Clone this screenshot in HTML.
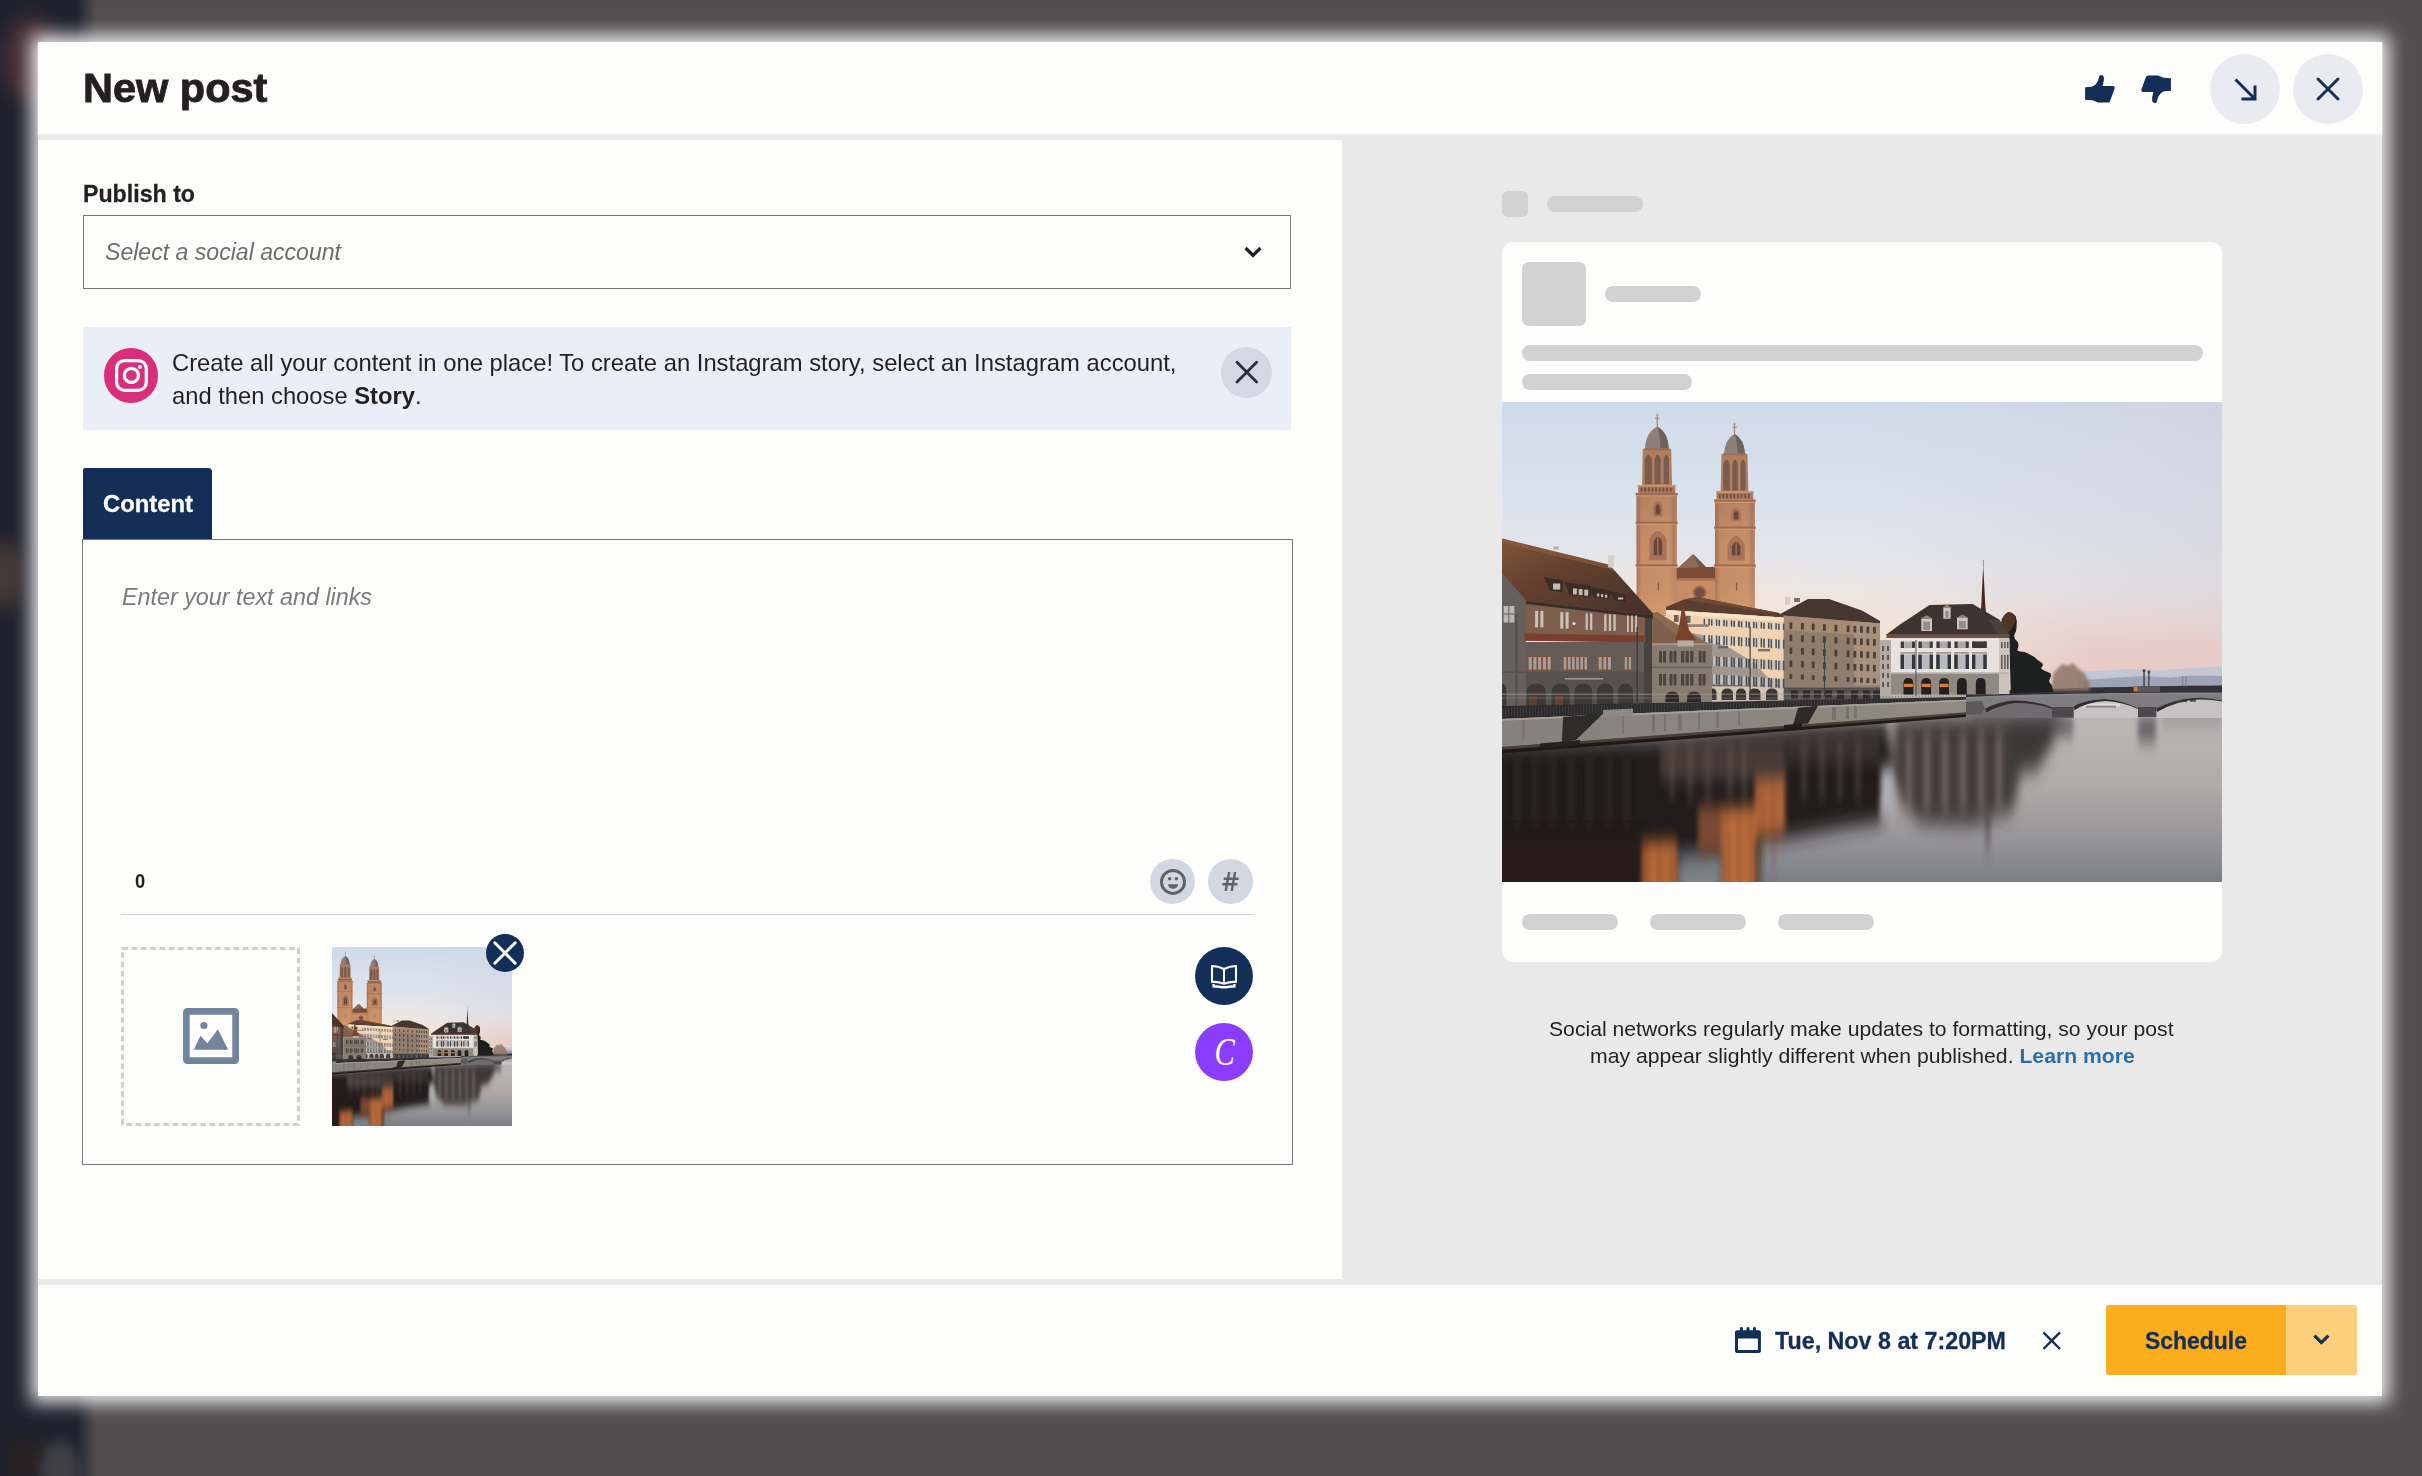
<!DOCTYPE html>
<html lang="en"><head><meta charset="utf-8"><title>New post</title>
<style>
*{box-sizing:border-box;margin:0;padding:0}
html,body{width:2422px;height:1476px;overflow:hidden;background:#524e4f}
body{position:relative;font-family:"Liberation Sans",sans-serif}
.a{position:absolute}
.t{position:absolute;white-space:nowrap;transform-origin:0 0;display:block}
.t b{font-weight:700}
.bgstrip{left:0;top:0;width:110px;height:1476px;background:linear-gradient(to right,#1f212d 0,#1f212d 76px,rgba(31,33,45,0) 96px)}
.blob{border-radius:50%;filter:blur(9px)}
.modal{left:38px;top:42px;width:2344px;height:1354px;background:#e9e9e9;box-shadow:0 0 17px 7px rgba(255,255,255,.88)}
.w{background:#fdfdfc}
.header{left:0;top:0;width:2344px;height:92px;box-shadow:0 1px 2px #f1f1f1}
.leftp{left:0;top:98px;width:1304px;height:1139px}
.footer{left:0;top:1243px;width:2344px;height:111px}
.pill{background:#d2d2d2;border-radius:8px;height:16px}
.circ{border-radius:50%}
svg{position:absolute;display:block;overflow:visible}

</style></head>
<body>
<!-- blurred dashboard behind the dialog -->
<div class="a bgstrip"></div>
<div class="a blob" style="left:2px;top:16px;width:58px;height:86px;background:#4d3338;opacity:.85"></div>
<div class="a blob" style="left:-10px;top:540px;width:30px;height:70px;background:#5b4a3a;opacity:.7"></div>
<div class="a blob" style="left:6px;top:1438px;width:40px;height:44px;background:#2a2220;opacity:.9"></div>
<div class="a blob" style="left:40px;top:1440px;width:40px;height:60px;background:#47474b;opacity:.8;filter:blur(6px)"></div>

<!-- dialog shell -->
<div class="a modal" role="dialog" aria-label="New post">
  <div class="a w header"></div>
  <div class="a w leftp"></div>
  <div class="a w footer"></div>
</div>

<header>
<h1 class="t" style="left:83.4px;top:66.73px;font:normal 700 41.43px/1 'Liberation Sans', sans-serif;color:#241f20;transform:scaleX(1.0015);-webkit-text-stroke:0.9px #241f20;">New post</h1>
<div class="a circ" style="left:2210px;top:54px;width:70px;height:70px;background:#e9ebf0"></div>
<div class="a circ" style="left:2293px;top:54px;width:70px;height:70px;background:#e9ebf0"></div>
<!-- thumbs -->
<svg style="left:2085px;top:75px" width="30" height="28" viewBox="0 0 30 28"><path id="thumb" fill="#132e57" d="M0.1,24.7 L0.1,12.2 L6.6,11.8 Q11.3,10.2 13.2,4.9 L14.1,1.6 Q14.6,0 16.1,0 Q18.6,0.2 18.8,2 L18.9,4.9 L17.7,10.9 L27.6,10.9 Q30.2,11.3 29.6,13.4 L26.1,23.2 L24.7,26.4 Q24,27.6 22.6,27.6 L13.2,27.6 L7.3,25.2 Z"/></svg>
<svg style="left:2141px;top:75px" width="30" height="28" viewBox="0 0 30 28"><path fill="#132e57" transform="rotate(180 15 14)" d="M0.1,24.7 L0.1,12.2 L6.6,11.8 Q11.3,10.2 13.2,4.9 L14.1,1.6 Q14.6,0 16.1,0 Q18.6,0.2 18.8,2 L18.9,4.9 L17.7,10.9 L27.6,10.9 Q30.2,11.3 29.6,13.4 L26.1,23.2 L24.7,26.4 Q24,27.6 22.6,27.6 L13.2,27.6 L7.3,25.2 Z"/></svg>
<!-- minimize arrow + close -->
<svg style="left:2210px;top:54px" width="70" height="70" viewBox="0 0 70 70"><path fill="none" stroke="#132e57" stroke-width="3" d="M25.5,25.5 L44.5,44.5 M45,31.5 V45 H31.5"/></svg>
<svg style="left:2293px;top:54px" width="70" height="70" viewBox="0 0 70 70"><path fill="none" stroke="#132e57" stroke-width="3" stroke-linecap="round" d="M25,25 L45,45 M45,25 L25,45"/></svg>
</header>

<main>
<section class="composer">
<!-- select -->
<div class="a" style="left:83px;top:215px;width:1208px;height:74px;border:1.4px solid #777"></div>
<!-- instagram banner -->
<div class="a" style="left:83px;top:327px;width:1208px;height:103px;background:#e9eef7"></div>
<div class="a circ" style="left:103.8px;top:348px;width:54.6px;height:55px;background:#d92f7a"></div>
<div class="a circ" style="left:1221px;top:347px;width:51px;height:51px;background:#d3d8e2"></div>
<!-- content tab + editor box -->
<div class="a" style="left:83px;top:468px;width:129px;height:72px;background:#132e57;border-radius:2px 4px 0 0"></div>
<div class="a" style="left:81.5px;top:538.5px;width:1211px;height:626.5px;border:1.5px solid #777"></div>
<div class="a" style="left:121px;top:913.5px;width:1132px;height:1.5px;background:#cdd0d5"></div>
<div class="a circ" style="left:1150px;top:859px;width:45px;height:45px;background:#d2d7e1"></div>
<div class="a circ" style="left:1208px;top:859px;width:45px;height:45px;background:#d2d7e1"></div>
<div class="a circ" style="left:1195px;top:946.5px;width:58px;height:58px;background:#132e57"></div>
<div class="a circ" style="left:1195px;top:1023px;width:58px;height:58px;background:#8b3dff"></div>
<!-- dashed upload box -->
<svg style="left:121px;top:947px" width="179" height="179"><rect x="1.5" y="1.5" width="176" height="176" fill="none" stroke="#cfcfcf" stroke-width="3" stroke-dasharray="5.6 3.66"/></svg>
<label class="t" style="left:83.4px;top:182.77px;font:normal 700 23.43px/1 'Liberation Sans', sans-serif;color:#241f20;transform:scaleX(0.9894);-webkit-text-stroke:0.3px #241f20;">Publish to</label>
<span class="t" style="left:105px;top:240.34px;font:italic 400 24.29px/1 'Liberation Sans', sans-serif;color:#6d6d6d;transform:scaleX(0.9502);">Select a social account</span>
<p class="t" style="left:172.4px;top:351.48px;font:normal 400 24.0px/1 'Liberation Sans', sans-serif;color:#241f20;transform:scaleX(0.9916);">Create all your content in one place! To create an Instagram story, select an Instagram account,</p>
<p class="t" style="left:172.4px;top:383.58px;font:normal 400 24.0px/1 'Liberation Sans', sans-serif;color:#241f20;transform:scaleX(0.9893);">and then choose <b>Story</b>.</p>
<span class="t" style="left:102.6px;top:491.84px;font:normal 700 24.29px/1 'Liberation Sans', sans-serif;color:#ffffff;transform:scaleX(0.9813);-webkit-text-stroke:0.3px #fff;">Content</span>
<span class="t" style="left:122px;top:584.64px;font:italic 400 24.29px/1 'Liberation Sans', sans-serif;color:#7b7b7b;transform:scaleX(0.9598);">Enter your text and links</span>
<span class="t" style="left:134.7px;top:872.15px;font:normal 700 19.43px/1 'Liberation Sans', sans-serif;color:#241f20;transform:scaleX(0.9434);">0</span>
</section>

<aside class="preview">
<div class="a pill" style="left:1502px;top:191px;width:26px;height:26px;border-radius:6px"></div>
<div class="a pill" style="left:1547px;top:196px;width:96px"></div>
<div class="a w" style="left:1502px;top:242px;width:720px;height:720px;border-radius:11px"></div>
<div class="a pill" style="left:1522px;top:262px;width:64px;height:64px;border-radius:7px"></div>
<div class="a pill" style="left:1605px;top:286px;width:96px"></div>
<div class="a pill" style="left:1522px;top:345px;width:681px"></div>
<div class="a pill" style="left:1522px;top:374px;width:170px"></div>
<div class="a pill" style="left:1522px;top:914px;width:96px"></div>
<div class="a pill" style="left:1650px;top:914px;width:96px"></div>
<div class="a pill" style="left:1778px;top:914px;width:96px"></div>
<p class="t" style="left:1549.4px;top:1018.74px;font:normal 400 20.86px/1 'Liberation Sans', sans-serif;color:#241f20;transform:scaleX(1.0144);">Social networks regularly make updates to formatting, so your post</p>
<p class="t" style="left:1589.6px;top:1046.44px;font:normal 400 20.86px/1 'Liberation Sans', sans-serif;color:#241f20;transform:scaleX(1.0155);">may appear slightly different when published. <b style="color:#2f6fa7">Learn more</b></p>
</aside>

<!-- photo (preview image + composer thumbnail share one symbol) -->
<svg width="0" height="0" style="position:absolute"><defs>
<linearGradient id="zsky" x1="0" y1="0" x2="0" y2="1">
<stop offset="0" stop-color="#cedbea"/><stop offset=".25" stop-color="#d8e1ec"/><stop offset=".5" stop-color="#e6e6ea"/><stop offset=".68" stop-color="#f0e4dc"/><stop offset=".85" stop-color="#f3dfd0"/><stop offset="1" stop-color="#f0d8c8"/></linearGradient>
<linearGradient id="zskyr" x1="0" y1="0" x2="1" y2="0"><stop offset="0" stop-color="#cfcfdc" stop-opacity="0"/><stop offset=".5" stop-color="#cfcfdc" stop-opacity="0"/><stop offset="1" stop-color="#d2cfdb" stop-opacity=".55"/></linearGradient>
<radialGradient id="zpink" cx=".5" cy=".5" r=".5"><stop offset="0" stop-color="#e7c5c1" stop-opacity=".95"/><stop offset=".45" stop-color="#e8c9c4" stop-opacity=".7"/><stop offset="1" stop-color="#ecd2cc" stop-opacity="0"/></radialGradient>
<radialGradient id="zcream" cx=".5" cy=".5" r=".5"><stop offset="0" stop-color="#f8e7d6" stop-opacity=".95"/><stop offset=".5" stop-color="#f6e5d6" stop-opacity=".6"/><stop offset="1" stop-color="#f4e4d8" stop-opacity="0"/></radialGradient>
<linearGradient id="zwater" x1="0" y1="0" x2="0" y2="1"><stop offset="0" stop-color="#bdb9ba"/><stop offset=".25" stop-color="#b9b2b0"/><stop offset=".5" stop-color="#b0a9a6"/><stop offset=".78" stop-color="#96959a"/><stop offset="1" stop-color="#7b7e86"/></linearGradient>
<linearGradient id="ztower" x1="0" y1="0" x2="1" y2="0"><stop offset="0" stop-color="#a8714f"/><stop offset=".12" stop-color="#c98e66"/><stop offset=".8" stop-color="#cf966e"/><stop offset="1" stop-color="#b98260"/></linearGradient>
<linearGradient id="ztowerv" x1="0" y1="0" x2="0" y2="1"><stop offset="0" stop-color="#8a6a58" stop-opacity=".35"/><stop offset=".5" stop-color="#8a6a58" stop-opacity=".05"/><stop offset="1" stop-color="#e9a674" stop-opacity=".35"/></linearGradient>
<linearGradient id="zroofL" x1="0" y1="0" x2="1" y2="1"><stop offset="0" stop-color="#80543a"/><stop offset=".4" stop-color="#63412f"/><stop offset="1" stop-color="#43302a"/></linearGradient>
<linearGradient id="zdarkfade" x1="0" y1="0" x2="0" y2="1"><stop offset="0" stop-color="#1d1819"/><stop offset=".7" stop-color="#1b1617"/><stop offset="1" stop-color="#22160f"/></linearGradient>
<linearGradient id="zwall" x1="0" y1="0" x2="1" y2="0"><stop offset="0" stop-color="#85817c"/><stop offset=".5" stop-color="#8a857f"/><stop offset="1" stop-color="#918a82"/></linearGradient>
<filter id="zb1" x="-20%" y="-20%" width="140%" height="140%"><feGaussianBlur stdDeviation="2.8 8"/></filter>
<filter id="zb2" x="-20%" y="-20%" width="140%" height="140%"><feGaussianBlur stdDeviation="4 10"/></filter>
<filter id="zb3" x="-20%" y="-20%" width="140%" height="140%"><feGaussianBlur stdDeviation="1.2 3"/></filter>
<filter id="zb0" x="-20%" y="-20%" width="140%" height="140%"><feGaussianBlur stdDeviation="1.5"/></filter>
<clipPath id="zclip"><rect x="0" y="0" width="720" height="480"/></clipPath>
<clipPath id="zthumb"><rect x="120" y="0" width="480" height="480"/></clipPath>

<symbol id="zurich" viewBox="0 0 720 480" preserveAspectRatio="none"><g clip-path="url(#zclip)">
<rect x="0.0" y="0.0" width="720.0" height="330.0" fill="url(#zsky)" />
<rect x="0.0" y="0.0" width="720.0" height="300.0" fill="url(#zskyr)" />
<rect x="260.0" y="185.0" width="820.0" height="200.0" fill="url(#zpink)" />
<rect x="-200.0" y="150.0" width="800.0" height="260.0" fill="url(#zcream)" />
<path d="M576,270 L600,268.5 L630,267 L660,268 L690,266 L720,264.5 L720,290 L576,290 Z" fill="#c3c6d3" />
<path d="M582,278 L610,276 L640,274 L668,275.5 L690,273.5 L720,274 L720,292 L582,292 Z" fill="#9da4b5" />
<rect x="0.0" y="292.0" width="720.0" height="188.0" fill="url(#zwater)" />
<g filter="url(#zb2)">
<polygon points="-30.0,340.0 150.0,336.0 290.0,326.0 385.0,320.0 392.0,372.0 380.0,420.0 330.0,428.0 290.0,436.0 258.0,438.0 254.0,520.0 -30.0,520.0" fill="#221c1c" />
<polygon points="176.0,458.0 220.0,452.0 222.0,520.0 174.0,520.0" fill="#7f8188" />
<polygon points="392.0,316.0 516.0,312.0 518.0,372.0 512.0,408.0 470.0,424.0 420.0,422.0 398.0,400.0 392.0,370.0" fill="#453d3c" />
<polygon points="505.0,312.0 556.0,310.0 552.0,340.0 535.0,368.0 512.0,372.0" fill="#3d3838" />
</g>
<g filter="url(#zb1)">
<rect x="158.0" y="338.0" width="126.0" height="40.0" fill="#5d5049" opacity=".6"/>
<rect x="286.0" y="330.0" width="92.0" height="30.0" fill="#4f443f" opacity=".55"/>
<rect x="12.0" y="352.0" width="7.0" height="70.0" fill="#3a2e2a" opacity=".5"/>
<rect x="30.0" y="352.0" width="7.0" height="70.0" fill="#3a2e2a" opacity=".5"/>
<rect x="47.0" y="352.0" width="7.0" height="70.0" fill="#3a2e2a" opacity=".5"/>
<rect x="66.0" y="352.0" width="7.0" height="70.0" fill="#3a2e2a" opacity=".5"/>
<rect x="84.0" y="352.0" width="7.0" height="70.0" fill="#3a2e2a" opacity=".5"/>
<rect x="103.0" y="352.0" width="7.0" height="70.0" fill="#3a2e2a" opacity=".5"/>
<rect x="121.0" y="352.0" width="7.0" height="70.0" fill="#3a2e2a" opacity=".5"/>
<polygon points="379.0,366.0 392.0,366.0 393.0,414.0 378.0,418.0" fill="#aeadb2" />
<polygon points="253.0,378.0 283.0,376.0 283.0,430.0 268.0,434.0 253.0,434.0" fill="#b3663a" />
<polygon points="220.0,406.0 254.0,404.0 254.0,500.0 220.0,500.0" fill="#bb6c3b" />
<polygon points="139.0,440.0 175.0,438.0 175.0,500.0 139.0,500.0" fill="#b66837" />
<rect x="144.0" y="442.0" width="3.0" height="90.0" fill="#6f3f26" opacity=".45"/>
<rect x="156.0" y="442.0" width="3.0" height="90.0" fill="#6f3f26" opacity=".45"/>
<rect x="168.0" y="442.0" width="3.0" height="90.0" fill="#6f3f26" opacity=".45"/>
<rect x="224.0" y="408.0" width="3.0" height="90.0" fill="#6f3f26" opacity=".45"/>
<rect x="236.0" y="408.0" width="3.0" height="90.0" fill="#6f3f26" opacity=".45"/>
<rect x="247.0" y="408.0" width="3.0" height="90.0" fill="#6f3f26" opacity=".45"/>
<rect x="258.0" y="380.0" width="3.0" height="90.0" fill="#6f3f26" opacity=".45"/>
<rect x="270.0" y="380.0" width="3.0" height="90.0" fill="#6f3f26" opacity=".45"/>
<polygon points="196.0,404.0 220.0,404.0 220.0,450.0 196.0,452.0" fill="#7a4a30" />
<polygon points="483.0,410.0 488.0,410.0 486.5,452.0 485.0,452.0" fill="#4a4345" />
<rect x="404.0" y="330.0" width="6.0" height="80.0" fill="#8b7f78" opacity=".55"/>
<rect x="422.0" y="330.0" width="6.0" height="80.0" fill="#8b7f78" opacity=".55"/>
<rect x="440.0" y="330.0" width="6.0" height="80.0" fill="#8b7f78" opacity=".55"/>
<rect x="458.0" y="330.0" width="6.0" height="80.0" fill="#8b7f78" opacity=".55"/>
<rect x="476.0" y="330.0" width="6.0" height="80.0" fill="#8b7f78" opacity=".55"/>
<rect x="494.0" y="330.0" width="6.0" height="80.0" fill="#8b7f78" opacity=".55"/>
<rect x="168.0" y="338.0" width="4.0" height="60.0" fill="#6e625a" opacity=".5"/>
<rect x="186.0" y="338.0" width="4.0" height="60.0" fill="#6e625a" opacity=".5"/>
<rect x="204.0" y="338.0" width="4.0" height="60.0" fill="#6e625a" opacity=".5"/>
<rect x="226.0" y="338.0" width="4.0" height="60.0" fill="#6e625a" opacity=".5"/>
<rect x="240.0" y="338.0" width="4.0" height="60.0" fill="#6e625a" opacity=".5"/>
<rect x="300.0" y="338.0" width="4.0" height="60.0" fill="#6e625a" opacity=".5"/>
<rect x="318.0" y="338.0" width="4.0" height="60.0" fill="#6e625a" opacity=".5"/>
<rect x="336.0" y="338.0" width="4.0" height="60.0" fill="#6e625a" opacity=".5"/>
<rect x="354.0" y="338.0" width="4.0" height="60.0" fill="#6e625a" opacity=".5"/>
<rect x="551.0" y="314.0" width="20.0" height="20.0" fill="#4e4c51" opacity=".8"/>
<rect x="636.0" y="314.0" width="18.0" height="26.0" fill="#514f55" opacity=".8"/>
<rect x="470.0" y="313.0" width="90.0" height="9.0" fill="#4a484d" opacity=".7"/>
<rect x="660.0" y="312.0" width="60.0" height="12.0" fill="#77757a" opacity=".5"/>
</g>
<rect x="-10" y="430" width="150" height="60" fill="#2c1a12" opacity=".55" filter="url(#zb2)"/>
<rect x="470.0" y="294.0" width="82.0" height="22.0" fill="#6f6c70" />
<rect x="552.0" y="294.0" width="168.0" height="22.0" fill="#c6c3c5" />
<rect x="578.0" y="301.5" width="40.0" height="3.2" fill="#e4e2e3" opacity=".8"/>
<rect x="584.0" y="303.6" width="30.0" height="2.0" fill="#6a6a70" opacity=".7"/>
<rect x="679.0" y="296.5" width="6.0" height="3.6" fill="#5a595e" />
<rect x="688.0" y="296.2" width="6.0" height="3.6" fill="#5a595e" />
<path d="M464,290.5 L480,289.6 L496,288.8 L512,287.9 L528,287.4 L544,286.9 L560,286.4 L576,286.0 L592,285.6 L608,285.2 L624,284.9 L640,284.5 L656,284.3 L672,284.0 L688,283.8 L704,283.7 L720,283.5 L720,298.5 Q708,295.6 696,295.8 Q672,296.8 654,306.6 L654.3,315.2 L636,315.2 L636,306.6 Q621,298 602.8,296.9 Q582,297.5 571.6,304.5 L571.6,315.7 L550,315.7 L550,305.5 Q535,298.8 512,298.5 Q496,299.5 483,307 L478,312 L464,313 Z" fill="#7f7c80" />
<path d="M464,295.0 L480,294.3 L496,293.6 L512,292.9 L528,292.5 L544,292.2 L560,291.9 L576,291.6 L592,291.4 L608,291.1 L624,290.9 L640,290.8 L656,290.7 L672,290.6 L688,290.5 L704,290.5 L720,290.5 L720,292.7 L704,292.7 L688,292.7 L672,292.8 L656,292.9 L640,293.0 L624,293.1 L608,293.3 L592,293.6 L576,293.8 L560,294.1 L544,294.4 L528,294.7 L512,295.1 L496,295.8 L480,296.5 L464,297.2 Z" fill="#8a888c" opacity=".7"/>
<path d="M483,307 Q496,299.5 512,298.5 Q535,298.8 550,305.5 L550,306.8 Q535,301 513,301 Q498,302.5 484.5,310.5 Z" fill="#2f2d2e" />
<path d="M571.6,304.5 Q582,297.5 602.8,296.9 Q621,298 636,306.6 L636,307.2 Q621,299.8 603,299 Q584,300.2 572.6,308.3 Z" fill="#2f2d2e" />
<path d="M654,306.6 Q672,296.8 696,295.8 Q708,295.6 720,298.5 L720,299.6 Q708,297.2 696,297.6 Q674,299 655,310 Z" fill="#333132" />
<rect x="550.0" y="305.0" width="21.6" height="10.7" fill="#4b494c" />
<rect x="636.0" y="305.0" width="18.3" height="10.2" fill="#4b494c" />
<polygon points="464.0,300.0 480.0,299.0 483.0,307.0 478.0,312.0 464.0,313.0" fill="#5b595c" />
<path d="M464,290.5 L480,289.6 L496,288.8 L512,287.9 L528,287.4 L544,286.9 L560,286.4 L576,286.0 L592,285.6 L608,285.2 L624,284.9 L640,284.5 L656,284.3 L672,284.0 L688,283.8 L704,283.7 L720,283.5 L720,290.5 L704,290.5 L688,290.5 L672,290.6 L656,290.7 L640,290.8 L624,290.9 L608,291.1 L592,291.4 L576,291.6 L560,291.9 L544,292.2 L528,292.5 L512,292.9 L496,293.6 L480,294.3 L464,295.0 Z" fill="#313137" />
<rect x="632.0" y="284.3" width="26.0" height="5.8" fill="#5a585d" />
<rect x="631.5" y="284.6" width="4.0" height="4.5" fill="#d97a2a" />
<rect x="641.4" y="269.0" width="1.3" height="15.5" fill="#35353a" />
<rect x="646.3" y="270.2" width="1.2" height="14.3" fill="#35353a" />
<rect x="640.8" y="267.3" width="2.5" height="2.6" fill="#3f3f45" />
<rect x="645.7" y="268.6" width="2.4" height="2.6" fill="#3f3f45" />
<rect x="680.5" y="274.0" width="0.7" height="11.0" fill="#6a6a72" />
<rect x="683.6" y="274.0" width="0.7" height="11.0" fill="#6a6a72" />
<path d="M549,289 L551,272 L556,266 L561,262 L566,264 L571,261 L577,267 L583,272 L587,280 L588,289 Z" fill="#8e7567" opacity=".85" filter="url(#zb0)"/>
<path d="M506.3,210 L502.5,213 L499.8,217.6 L499.2,224 L500.7,230.6 L503.5,234 L507.2,237 L508.8,291 L551.5,290 L550,284 L547,279.3 L549,274 L548.6,271.2 L542,268.5 L538.9,266.3 L541,263.5 L540.5,261.5 L535,257.5 L532.4,255 L526,251.5 L522.6,250 L518,249.5 L515.3,248.5 L516.5,244 L516,240.3 L513,237 L512,233.8 L514,229 L514.5,225.7 L514.8,219 L513.7,214.3 L510,211 Z" fill="#1d201e" />
<path d="M506.3,210 L502.5,213 L499.8,217.6 L499.2,224 L501,229 L506,231 L510,226 L513,220 L513.7,214.3 L510,211 Z" fill="#4f3626" />
<polygon points="175.0,166.0 177.5,164.5 191.0,152.0 205.0,166.0 214.0,165.5 214.0,200.0 175.0,200.0" fill="#8c6a57" />
<polygon points="191.0,152.0 205.0,166.0 198.0,166.5" fill="#75574a" />
<polygon points="174.0,166.3 219.0,164.6 219.0,176.5 173.0,177.5" fill="#7a4b36" />
<rect x="174.0" y="176.5" width="40.0" height="36.0" fill="#c78c66" />
<rect x="174.0" y="176.5" width="40.0" height="2.0" fill="#a6745a" />
<circle cx="197.6" cy="190.4" r="6.6" fill="#94664f"/><circle cx="197.6" cy="190.4" r="4.6" fill="#6f4f43"/>
<rect x="134.6" y="91.0" width="40.2" height="123.0" fill="url(#ztower)" />
<rect x="134.6" y="91.0" width="40.2" height="123.0" fill="url(#ztowerv)" />
<rect x="134.6" y="91.0" width="3.2" height="73.0" fill="#a9755a" opacity=".7"/>
<rect x="170.6" y="91.0" width="2.2" height="73.0" fill="#a9755a" opacity=".55"/>
<rect x="133.6" y="91.0" width="42.2" height="2.2" fill="#9d6c52" />
<rect x="133.6" y="93.2" width="42.2" height="1.2" fill="#dca57c" opacity=".6"/>
<rect x="133.6" y="119.5" width="42.2" height="2.2" fill="#9d6c52" />
<rect x="133.6" y="121.7" width="42.2" height="1.2" fill="#dca57c" opacity=".6"/>
<rect x="133.6" y="162.3" width="42.2" height="2.2" fill="#9d6c52" />
<rect x="133.6" y="164.5" width="42.2" height="1.2" fill="#dca57c" opacity=".6"/>
<polygon points="140.0,83.0 140.8,47.0 169.2,47.0 170.0,83.0" fill="#b07d5f" />
<path d="M142.7,82.0 L142.7,57.5 Q146.3,47.5 149.9,57.5 L149.9,82.0 Z" fill="#7a5c4e" />
<path d="M152.6,82.0 L152.6,57.5 Q155.6,47.5 158.6,57.5 L158.6,82.0 Z" fill="#7a5c4e" />
<path d="M161.6,82.0 L161.6,57.5 Q164.3,47.5 167.0,57.5 L167.0,82.0 Z" fill="#7a5c4e" />
<rect x="136.2" y="83.0" width="37.0" height="8.0" fill="#a9775b" />
<rect x="135.6" y="83.0" width="38.2" height="1.6" fill="#c9956f" />
<rect x="138.6" y="85.6" width="1.6" height="4.0" fill="#6f4d3d" />
<rect x="142.3" y="85.6" width="1.6" height="4.0" fill="#6f4d3d" />
<rect x="145.9" y="85.6" width="1.6" height="4.0" fill="#6f4d3d" />
<rect x="149.6" y="85.6" width="1.6" height="4.0" fill="#6f4d3d" />
<rect x="153.3" y="85.6" width="1.6" height="4.0" fill="#6f4d3d" />
<rect x="157.0" y="85.6" width="1.6" height="4.0" fill="#6f4d3d" />
<rect x="160.6" y="85.6" width="1.6" height="4.0" fill="#6f4d3d" />
<rect x="164.3" y="85.6" width="1.6" height="4.0" fill="#6f4d3d" />
<rect x="168.0" y="85.6" width="1.6" height="4.0" fill="#6f4d3d" />
<path d="M143.0,47.0 Q143.5,30.4 155.3,24.4 Q166.2,30.4 166.7,47.0 Z" fill="#8d8079" />
<path d="M155.3,24.4 Q166.2,30.4 166.7,47.0 L158.3,47.0 Q158.3,32.4 155.3,24.4 Z" fill="#6e625c" />
<rect x="142.4" y="46.0" width="24.9" height="2.4" fill="#9a7059" />
<rect x="154.7" y="13.5" width="1.2" height="11.9" fill="#a98363" />
<rect x="153.1" y="15.7" width="4.4" height="1.1" fill="#a98363" />
<circle cx="155.3" cy="12.9" r="1.3" fill="#c9a27a"/>
<path d="M151.29999999999998,114.5 L151.29999999999998,104 Q155.89999999999998,94 160.49999999999997,104 L160.49999999999997,114.5 Z" fill="#a87457" />
<path d="M153.49999999999997,112.5 L153.49999999999997,105 Q155.89999999999998,99 158.29999999999998,105 L158.29999999999998,112.5 Z" fill="#6c4b3c" />
<path d="M147.29999999999998,158.3 L147.29999999999998,137.5 Q155.89999999999998,120.5 164.49999999999997,137.5 L164.49999999999997,158.3 Z" fill="#a87457" />
<path d="M151.7,153.3 L151.7,139.5 Q155.89999999999998,130.5 160.09999999999997,139.5 L160.09999999999997,153.3 Z" fill="#65463a" />
<rect x="155.4" y="135.5" width="1.0" height="17.8" fill="#b98564" />
<rect x="155.7" y="180.3" width="1.4" height="8.0" fill="#8a5f49" />
<rect x="213.0" y="97.6" width="39.8" height="116.4" fill="url(#ztower)" />
<rect x="213.0" y="97.6" width="39.8" height="116.4" fill="url(#ztowerv)" />
<rect x="213.0" y="97.6" width="3.2" height="66.4" fill="#a9755a" opacity=".7"/>
<rect x="248.6" y="97.6" width="2.2" height="66.4" fill="#a9755a" opacity=".55"/>
<rect x="212.0" y="97.6" width="41.8" height="2.2" fill="#9d6c52" />
<rect x="212.0" y="99.8" width="41.8" height="1.2" fill="#dca57c" opacity=".6"/>
<rect x="212.0" y="124.5" width="41.8" height="2.2" fill="#9d6c52" />
<rect x="212.0" y="126.7" width="41.8" height="1.2" fill="#dca57c" opacity=".6"/>
<rect x="212.0" y="162.4" width="41.8" height="2.2" fill="#9d6c52" />
<rect x="212.0" y="164.6" width="41.8" height="1.2" fill="#dca57c" opacity=".6"/>
<polygon points="218.7,89.4 219.5,52.0 245.5,52.0 246.3,89.4" fill="#b07d5f" />
<path d="M221.2,88.4 L221.2,62.5 Q224.5,52.5 227.8,62.5 L227.8,88.4 Z" fill="#7a5c4e" />
<path d="M230.3,88.4 L230.3,62.5 Q233.1,52.5 235.8,62.5 L235.8,88.4 Z" fill="#7a5c4e" />
<path d="M238.6,88.4 L238.6,62.5 Q241.1,52.5 243.5,62.5 L243.5,88.4 Z" fill="#7a5c4e" />
<rect x="214.6" y="89.4" width="36.6" height="8.2" fill="#a9775b" />
<rect x="214.0" y="89.4" width="37.8" height="1.6" fill="#c9956f" />
<rect x="217.0" y="92.0" width="1.6" height="4.2" fill="#6f4d3d" />
<rect x="220.6" y="92.0" width="1.6" height="4.2" fill="#6f4d3d" />
<rect x="224.2" y="92.0" width="1.6" height="4.2" fill="#6f4d3d" />
<rect x="227.9" y="92.0" width="1.6" height="4.2" fill="#6f4d3d" />
<rect x="231.5" y="92.0" width="1.6" height="4.2" fill="#6f4d3d" />
<rect x="235.1" y="92.0" width="1.6" height="4.2" fill="#6f4d3d" />
<rect x="238.7" y="92.0" width="1.6" height="4.2" fill="#6f4d3d" />
<rect x="242.4" y="92.0" width="1.6" height="4.2" fill="#6f4d3d" />
<rect x="246.0" y="92.0" width="1.6" height="4.2" fill="#6f4d3d" />
<path d="M222.0,52.0 Q222.5,37.7 232.5,31.7 Q242.5,37.7 243.0,52.0 Z" fill="#8d8079" />
<path d="M232.5,31.7 Q242.5,37.7 243.0,52.0 L235.5,52.0 Q235.5,39.7 232.5,31.7 Z" fill="#6e625c" />
<rect x="221.4" y="51.0" width="22.2" height="2.4" fill="#9a7059" />
<rect x="231.9" y="22.5" width="1.2" height="10.2" fill="#a98363" />
<rect x="230.3" y="24.7" width="4.4" height="1.1" fill="#a98363" />
<circle cx="232.5" cy="21.9" r="1.3" fill="#c9a27a"/>
<path d="M229.5,119.5 L229.5,110.6 Q234.1,100.6 238.7,110.6 L238.7,119.5 Z" fill="#a87457" />
<path d="M231.7,117.5 L231.7,111.6 Q234.1,105.6 236.5,111.6 L236.5,117.5 Z" fill="#6c4b3c" />
<path d="M225.5,158.4 L225.5,142.5 Q234.1,125.5 242.7,142.5 L242.7,158.4 Z" fill="#a87457" />
<path d="M229.9,153.4 L229.9,144.5 Q234.1,135.5 238.29999999999998,144.5 L238.29999999999998,153.4 Z" fill="#65463a" />
<rect x="233.6" y="140.5" width="1.0" height="12.9" fill="#b98564" />
<rect x="233.9" y="180.4" width="1.4" height="8.0" fill="#8a5f49" />
<rect x="372.0" y="238.0" width="18.0" height="58.0" fill="#b3aca5" />
<rect x="375.0" y="244.0" width="2.0" height="5.0" fill="#5d5853" />
<rect x="380.0" y="244.0" width="2.0" height="5.0" fill="#5d5853" />
<rect x="385.0" y="244.0" width="2.0" height="5.0" fill="#5d5853" />
<rect x="375.0" y="253.0" width="2.0" height="5.0" fill="#5d5853" />
<rect x="380.0" y="253.0" width="2.0" height="5.0" fill="#5d5853" />
<rect x="385.0" y="253.0" width="2.0" height="5.0" fill="#5d5853" />
<rect x="375.0" y="262.0" width="2.0" height="5.0" fill="#5d5853" />
<rect x="380.0" y="262.0" width="2.0" height="5.0" fill="#5d5853" />
<rect x="385.0" y="262.0" width="2.0" height="5.0" fill="#5d5853" />
<rect x="375.0" y="271.0" width="2.0" height="5.0" fill="#5d5853" />
<rect x="380.0" y="271.0" width="2.0" height="5.0" fill="#5d5853" />
<rect x="385.0" y="271.0" width="2.0" height="5.0" fill="#5d5853" />
<rect x="375.0" y="280.0" width="2.0" height="5.0" fill="#5d5853" />
<rect x="380.0" y="280.0" width="2.0" height="5.0" fill="#5d5853" />
<rect x="385.0" y="280.0" width="2.0" height="5.0" fill="#5d5853" />
<path d="M481.2,163 L483.4,205 L484.6,215 L478,215 L479.2,205 Z" fill="#43291f" />
<rect x="480.9" y="158.0" width="0.9" height="7.0" fill="#b48a5a" />
<polygon points="384.4,232.6 398.0,222.6 427.5,203.0 470.6,202.0 497.0,217.5 508.0,233.5 506.0,236.0 388.0,236.0" fill="#3c3431" />
<polygon points="497.0,217.5 508.0,233.5 497.0,233.5 486.0,217.5" fill="#4a413d" />
<rect x="384.4" y="232.2" width="123.0" height="3.8" fill="#6a4f42" />
<rect x="419.3" y="216.7" width="10.7" height="12.3" fill="#cfc5ba" />
<rect x="421.3" y="219.7" width="6.7" height="8.3" fill="#8c8d92" />
<polygon points="418.3,216.7 424.6,213.2 431.0,216.7" fill="#9c8474" />
<rect x="455.0" y="216.0" width="10.7" height="11.3" fill="#cfc5ba" />
<rect x="457.0" y="219.0" width="6.7" height="7.3" fill="#8c8d92" />
<polygon points="454.0,216.0 460.4,212.5 466.7,216.0" fill="#9c8474" />
<rect x="441.3" y="206.0" width="7.3" height="10.7" fill="#cfc5ba" />
<rect x="443.3" y="209.0" width="3.3" height="6.7" fill="#8c8d92" />
<polygon points="440.3,206.0 445.0,202.5 449.6,206.0" fill="#9c8474" />
<rect x="389.0" y="236.0" width="108.0" height="36.0" fill="#e7e2dd" />
<rect x="497.0" y="236.0" width="10.5" height="56.0" fill="#cbc4bc" />
<rect x="389.0" y="271.0" width="108.0" height="21.5" fill="#8f8982" />
<rect x="389.0" y="270.3" width="118.0" height="1.6" fill="#b9b2aa" />
<rect x="398.7" y="239.5" width="3.4" height="6.5" fill="#3c3c3c" />
<rect x="409.7" y="239.5" width="3.4" height="6.5" fill="#3c3c3c" />
<rect x="402.3" y="239.5" width="7.2" height="6.5" fill="#a9a9ae" />
<rect x="398.5" y="252.5" width="3.6" height="14.5" fill="#33363a" />
<rect x="409.7" y="252.5" width="3.6" height="14.5" fill="#33363a" />
<rect x="402.3" y="252.5" width="7.2" height="14.5" fill="#b9babf" />
<rect x="398.3" y="250.2" width="15.2" height="1.4" fill="#8f8982" />
<rect x="416.4" y="239.5" width="3.4" height="6.5" fill="#3c3c3c" />
<rect x="427.4" y="239.5" width="3.4" height="6.5" fill="#3c3c3c" />
<rect x="420.0" y="239.5" width="7.2" height="6.5" fill="#a9a9ae" />
<rect x="416.2" y="252.5" width="3.6" height="14.5" fill="#33363a" />
<rect x="427.4" y="252.5" width="3.6" height="14.5" fill="#33363a" />
<rect x="420.0" y="252.5" width="7.2" height="14.5" fill="#b9babf" />
<rect x="416.0" y="250.2" width="15.2" height="1.4" fill="#8f8982" />
<rect x="434.4" y="239.5" width="3.4" height="6.5" fill="#3c3c3c" />
<rect x="445.4" y="239.5" width="3.4" height="6.5" fill="#3c3c3c" />
<rect x="438.0" y="239.5" width="7.2" height="6.5" fill="#a9a9ae" />
<rect x="434.2" y="252.5" width="3.6" height="14.5" fill="#33363a" />
<rect x="445.4" y="252.5" width="3.6" height="14.5" fill="#33363a" />
<rect x="438.0" y="252.5" width="7.2" height="14.5" fill="#b9babf" />
<rect x="434.0" y="250.2" width="15.2" height="1.4" fill="#8f8982" />
<rect x="452.4" y="239.5" width="3.4" height="6.5" fill="#3c3c3c" />
<rect x="463.4" y="239.5" width="3.4" height="6.5" fill="#3c3c3c" />
<rect x="456.0" y="239.5" width="7.2" height="6.5" fill="#a9a9ae" />
<rect x="452.2" y="252.5" width="3.6" height="14.5" fill="#33363a" />
<rect x="463.4" y="252.5" width="3.6" height="14.5" fill="#33363a" />
<rect x="456.0" y="252.5" width="7.2" height="14.5" fill="#b9babf" />
<rect x="452.0" y="250.2" width="15.2" height="1.4" fill="#8f8982" />
<rect x="470.2" y="239.5" width="3.4" height="6.5" fill="#3c3c3c" />
<rect x="481.2" y="239.5" width="3.4" height="6.5" fill="#3c3c3c" />
<rect x="473.8" y="239.5" width="7.2" height="6.5" fill="#a9a9ae" />
<rect x="470.0" y="252.5" width="3.6" height="14.5" fill="#33363a" />
<rect x="481.2" y="252.5" width="3.6" height="14.5" fill="#33363a" />
<rect x="473.8" y="252.5" width="7.2" height="14.5" fill="#b9babf" />
<rect x="469.8" y="250.2" width="15.2" height="1.4" fill="#8f8982" />
<rect x="470.2" y="239.5" width="14.4" height="6.5" fill="#3a3a3a" />
<rect x="499.0" y="240.0" width="1.5" height="6.0" fill="#55565a" />
<rect x="502.2" y="240.0" width="1.5" height="6.0" fill="#55565a" />
<rect x="505.0" y="240.0" width="1.5" height="6.0" fill="#55565a" />
<rect x="499.0" y="253.0" width="1.5" height="14.0" fill="#55565a" />
<rect x="502.2" y="253.0" width="1.5" height="14.0" fill="#55565a" />
<rect x="505.0" y="253.0" width="1.5" height="14.0" fill="#55565a" />
<path d="M401.5,292.4 L401.5,281 Q401.5,276 406.4,276 Q411.3,276 411.3,281 L411.3,292.4 Z" fill="#25201f" />
<path d="M419.3,292.4 L419.3,281 Q419.3,276 424.2,276 Q429.1,276 429.1,281 L429.1,292.4 Z" fill="#25201f" />
<path d="M437.2,292.4 L437.2,281 Q437.2,276 442.09999999999997,276 Q447.0,276 447.0,281 L447.0,292.4 Z" fill="#25201f" />
<path d="M455,292.4 L455,281 Q455,276 459.9,276 Q464.8,276 464.8,281 L464.8,292.4 Z" fill="#25201f" />
<path d="M473.8,292.4 L473.8,281 Q473.8,276 478.7,276 Q483.6,276 483.6,281 L483.6,292.4 Z" fill="#25201f" />
<rect x="401.9" y="281.8" width="9.0" height="3.2" fill="#d9812f" />
<rect x="419.7" y="281.8" width="9.0" height="3.2" fill="#d9812f" />
<rect x="437.6" y="281.8" width="9.0" height="3.2" fill="#d9812f" />
<polygon points="279.0,211.5 306.0,197.0 327.0,197.0 360.0,208.5 378.0,219.0 378.0,222.0 279.0,214.0" fill="#463830" />
<rect x="283.0" y="194.5" width="5.0" height="8.0" fill="#d9cdbf" />
<rect x="292.0" y="196.0" width="6.0" height="4.0" fill="#7d7268" />
<polygon points="281.0,213.5 378.0,221.5 378.0,300.0 281.0,300.0" fill="#8f7d6d" />
<polygon points="281.0,213.5 378.0,221.5 378.0,234.0 281.0,228.0" fill="#a68a73" />
<polygon points="352.0,219.2 378.0,221.5 378.0,286.0 352.0,286.0" fill="#a8917c" />
<rect x="281.0" y="285.0" width="97.0" height="15.0" fill="#55504c" />
<rect x="281.0" y="283.5" width="97.0" height="2.0" fill="#8b8178" />
<rect x="287.5" y="220.4" width="2.8" height="6.6" fill="#4b4039" />
<rect x="299.0" y="221.0" width="2.8" height="6.6" fill="#4b4039" />
<rect x="309.8" y="221.6" width="2.8" height="6.6" fill="#4b4039" />
<rect x="321.0" y="222.2" width="2.8" height="6.6" fill="#4b4039" />
<rect x="332.5" y="222.8" width="2.8" height="6.6" fill="#4b4039" />
<rect x="344.7" y="223.5" width="2.8" height="6.6" fill="#4b4039" />
<rect x="351.5" y="223.9" width="2.8" height="6.6" fill="#4b4039" />
<rect x="358.0" y="224.2" width="2.8" height="6.6" fill="#4b4039" />
<rect x="364.5" y="224.6" width="2.8" height="6.6" fill="#4b4039" />
<rect x="371.0" y="224.9" width="2.8" height="6.6" fill="#4b4039" />
<rect x="287.5" y="232.6" width="2.8" height="6.6" fill="#4b4039" />
<rect x="299.0" y="233.2" width="2.8" height="6.6" fill="#4b4039" />
<rect x="309.8" y="233.8" width="2.8" height="6.6" fill="#4b4039" />
<rect x="321.0" y="234.4" width="2.8" height="6.6" fill="#4b4039" />
<rect x="332.5" y="235.0" width="2.8" height="6.6" fill="#4b4039" />
<rect x="344.7" y="235.7" width="2.8" height="6.6" fill="#4b4039" />
<rect x="351.5" y="236.1" width="2.8" height="6.6" fill="#4b4039" />
<rect x="358.0" y="236.4" width="2.8" height="6.6" fill="#4b4039" />
<rect x="364.5" y="236.8" width="2.8" height="6.6" fill="#4b4039" />
<rect x="371.0" y="237.1" width="2.8" height="6.6" fill="#4b4039" />
<rect x="287.5" y="245.4" width="2.8" height="6.6" fill="#4b4039" />
<rect x="299.0" y="246.0" width="2.8" height="6.6" fill="#4b4039" />
<rect x="309.8" y="246.6" width="2.8" height="6.6" fill="#4b4039" />
<rect x="321.0" y="247.2" width="2.8" height="6.6" fill="#4b4039" />
<rect x="332.5" y="247.8" width="2.8" height="6.6" fill="#4b4039" />
<rect x="344.7" y="248.5" width="2.8" height="6.6" fill="#4b4039" />
<rect x="351.5" y="248.9" width="2.8" height="6.6" fill="#4b4039" />
<rect x="358.0" y="249.2" width="2.8" height="6.6" fill="#4b4039" />
<rect x="364.5" y="249.6" width="2.8" height="6.6" fill="#4b4039" />
<rect x="371.0" y="249.9" width="2.8" height="6.6" fill="#4b4039" />
<rect x="287.5" y="258.4" width="2.8" height="6.6" fill="#4b4039" />
<rect x="299.0" y="259.0" width="2.8" height="6.6" fill="#4b4039" />
<rect x="309.8" y="259.6" width="2.8" height="6.6" fill="#4b4039" />
<rect x="321.0" y="260.2" width="2.8" height="6.6" fill="#4b4039" />
<rect x="332.5" y="260.8" width="2.8" height="6.6" fill="#4b4039" />
<rect x="344.7" y="261.5" width="2.8" height="6.6" fill="#4b4039" />
<rect x="351.5" y="261.9" width="2.8" height="6.6" fill="#4b4039" />
<rect x="358.0" y="262.2" width="2.8" height="6.6" fill="#4b4039" />
<rect x="364.5" y="262.6" width="2.8" height="6.6" fill="#4b4039" />
<rect x="371.0" y="262.9" width="2.8" height="6.6" fill="#4b4039" />
<rect x="287.5" y="271.9" width="2.8" height="5.0" fill="#4b4039" />
<rect x="299.0" y="272.5" width="2.8" height="5.0" fill="#4b4039" />
<rect x="309.8" y="273.1" width="2.8" height="5.0" fill="#4b4039" />
<rect x="321.0" y="273.7" width="2.8" height="5.0" fill="#4b4039" />
<rect x="332.5" y="274.3" width="2.8" height="5.0" fill="#4b4039" />
<rect x="344.7" y="275.0" width="2.8" height="5.0" fill="#4b4039" />
<rect x="351.5" y="275.4" width="2.8" height="5.0" fill="#4b4039" />
<rect x="358.0" y="275.7" width="2.8" height="5.0" fill="#4b4039" />
<rect x="364.5" y="276.1" width="2.8" height="5.0" fill="#4b4039" />
<rect x="371.0" y="276.4" width="2.8" height="5.0" fill="#4b4039" />
<rect x="289.0" y="288.5" width="7.0" height="8.5" fill="#2b2a2c" />
<rect x="301.0" y="288.5" width="7.0" height="8.5" fill="#2b2a2c" />
<rect x="312.0" y="288.5" width="7.0" height="8.5" fill="#2b2a2c" />
<rect x="323.0" y="288.5" width="7.0" height="8.5" fill="#2b2a2c" />
<rect x="335.0" y="288.5" width="7.0" height="8.5" fill="#2b2a2c" />
<rect x="349.0" y="288.5" width="7.0" height="8.5" fill="#2b2a2c" />
<rect x="361.0" y="288.5" width="7.0" height="8.5" fill="#2b2a2c" />
<rect x="371.0" y="288.5" width="7.0" height="8.5" fill="#2b2a2c" />
<polygon points="164.0,205.0 182.0,197.5 195.0,195.0 277.0,211.0 281.5,213.8 281.5,216.0 164.0,208.5" fill="#5b3e2f" />
<polygon points="182.0,197.5 195.0,195.0 277.0,211.0 270.0,211.5" fill="#6e4a36" />
<polygon points="164.0,208.0 281.5,215.5 281.5,300.0 164.0,302.0" fill="#a0978e" />
<polygon points="164.0,208.0 281.5,215.5 281.5,278.0 266.0,276.0 254.0,262.0 228.0,246.0 200.0,233.0 164.0,226.0" fill="#f0d2b1" />
<polygon points="164.0,208.0 281.5,215.5 281.5,219.5 164.0,212.0" fill="#f7e3c8" />
<rect x="205.0" y="284.0" width="76.5" height="17.0" fill="#cfc3b6" />
<rect x="205.0" y="282.6" width="76.5" height="1.8" fill="#6e6a66" />
<path d="M207,298 L207,292 Q207,286.5 210.8,286.5 Q214.6,286.5 214.6,292 L214.6,298 Z" fill="#3b3532" />
<path d="M219.5,298 L219.5,292 Q219.5,286.5 225.25,286.5 Q231.0,286.5 231.0,292 L231.0,298 Z" fill="#3b3532" />
<path d="M234,298 L234,292 Q234,286.5 239.0,286.5 Q244,286.5 244,292 L244,298 Z" fill="#3b3532" />
<path d="M247,298 L247,292 Q247,286.5 252.75,286.5 Q258.5,286.5 258.5,292 L258.5,298 Z" fill="#3b3532" />
<path d="M264,298 L264,292 Q264,286.5 269.8,286.5 Q275.6,286.5 275.6,292 L275.6,298 Z" fill="#3b3532" />
<rect x="201.6" y="216.9" width="1.7" height="6.2" fill="#4d4f52" />
<rect x="206.2" y="216.9" width="1.7" height="6.2" fill="#4d4f52" />
<rect x="203.3" y="216.9" width="2.9" height="6.2" fill="#d9d6d2" />
<rect x="209.0" y="217.4" width="1.7" height="6.2" fill="#4d4f52" />
<rect x="213.6" y="217.4" width="1.7" height="6.2" fill="#4d4f52" />
<rect x="210.7" y="217.4" width="2.9" height="6.2" fill="#d9d6d2" />
<rect x="216.5" y="217.9" width="1.7" height="6.2" fill="#4d4f52" />
<rect x="221.1" y="217.9" width="1.7" height="6.2" fill="#4d4f52" />
<rect x="218.2" y="217.9" width="2.9" height="6.2" fill="#d9d6d2" />
<rect x="223.9" y="218.3" width="1.7" height="6.2" fill="#4d4f52" />
<rect x="228.5" y="218.3" width="1.7" height="6.2" fill="#4d4f52" />
<rect x="225.6" y="218.3" width="2.9" height="6.2" fill="#d9d6d2" />
<rect x="231.4" y="218.8" width="1.7" height="6.2" fill="#4d4f52" />
<rect x="236.0" y="218.8" width="1.7" height="6.2" fill="#4d4f52" />
<rect x="233.1" y="218.8" width="2.9" height="6.2" fill="#d9d6d2" />
<rect x="238.8" y="219.3" width="1.7" height="6.2" fill="#4d4f52" />
<rect x="243.4" y="219.3" width="1.7" height="6.2" fill="#4d4f52" />
<rect x="240.5" y="219.3" width="2.9" height="6.2" fill="#d9d6d2" />
<rect x="246.3" y="219.8" width="1.7" height="6.2" fill="#4d4f52" />
<rect x="250.9" y="219.8" width="1.7" height="6.2" fill="#4d4f52" />
<rect x="248.0" y="219.8" width="2.9" height="6.2" fill="#d9d6d2" />
<rect x="253.8" y="220.2" width="1.7" height="6.2" fill="#4d4f52" />
<rect x="258.4" y="220.2" width="1.7" height="6.2" fill="#4d4f52" />
<rect x="255.4" y="220.2" width="2.9" height="6.2" fill="#d9d6d2" />
<rect x="261.2" y="220.7" width="1.7" height="6.2" fill="#4d4f52" />
<rect x="265.8" y="220.7" width="1.7" height="6.2" fill="#4d4f52" />
<rect x="262.9" y="220.7" width="2.9" height="6.2" fill="#d9d6d2" />
<rect x="268.6" y="221.2" width="1.7" height="6.2" fill="#4d4f52" />
<rect x="273.2" y="221.2" width="1.7" height="6.2" fill="#4d4f52" />
<rect x="270.3" y="221.2" width="2.9" height="6.2" fill="#d9d6d2" />
<rect x="276.1" y="221.7" width="1.7" height="6.2" fill="#4d4f52" />
<rect x="280.7" y="221.7" width="1.7" height="6.2" fill="#4d4f52" />
<rect x="277.8" y="221.7" width="2.9" height="6.2" fill="#d9d6d2" />
<rect x="201.6" y="232.9" width="1.7" height="9.0" fill="#4d4f52" />
<rect x="206.2" y="232.9" width="1.7" height="9.0" fill="#4d4f52" />
<rect x="203.3" y="232.9" width="2.9" height="9.0" fill="#d9d6d2" />
<rect x="209.0" y="233.4" width="1.7" height="9.0" fill="#4d4f52" />
<rect x="213.6" y="233.4" width="1.7" height="9.0" fill="#4d4f52" />
<rect x="210.7" y="233.4" width="2.9" height="9.0" fill="#d9d6d2" />
<rect x="216.5" y="233.9" width="1.7" height="9.0" fill="#4d4f52" />
<rect x="221.1" y="233.9" width="1.7" height="9.0" fill="#4d4f52" />
<rect x="218.2" y="233.9" width="2.9" height="9.0" fill="#d9d6d2" />
<rect x="223.9" y="234.3" width="1.7" height="9.0" fill="#4d4f52" />
<rect x="228.5" y="234.3" width="1.7" height="9.0" fill="#4d4f52" />
<rect x="225.6" y="234.3" width="2.9" height="9.0" fill="#d9d6d2" />
<rect x="231.4" y="234.8" width="1.7" height="9.0" fill="#4d4f52" />
<rect x="236.0" y="234.8" width="1.7" height="9.0" fill="#4d4f52" />
<rect x="233.1" y="234.8" width="2.9" height="9.0" fill="#d9d6d2" />
<rect x="238.8" y="235.3" width="1.7" height="9.0" fill="#4d4f52" />
<rect x="243.4" y="235.3" width="1.7" height="9.0" fill="#4d4f52" />
<rect x="240.5" y="235.3" width="2.9" height="9.0" fill="#d9d6d2" />
<rect x="246.3" y="235.8" width="1.7" height="9.0" fill="#4d4f52" />
<rect x="250.9" y="235.8" width="1.7" height="9.0" fill="#4d4f52" />
<rect x="248.0" y="235.8" width="2.9" height="9.0" fill="#d9d6d2" />
<rect x="253.8" y="236.2" width="1.7" height="9.0" fill="#4d4f52" />
<rect x="258.4" y="236.2" width="1.7" height="9.0" fill="#4d4f52" />
<rect x="255.4" y="236.2" width="2.9" height="9.0" fill="#d9d6d2" />
<rect x="261.2" y="236.7" width="1.7" height="9.0" fill="#4d4f52" />
<rect x="265.8" y="236.7" width="1.7" height="9.0" fill="#4d4f52" />
<rect x="262.9" y="236.7" width="2.9" height="9.0" fill="#d9d6d2" />
<rect x="268.6" y="237.2" width="1.7" height="9.0" fill="#4d4f52" />
<rect x="273.2" y="237.2" width="1.7" height="9.0" fill="#4d4f52" />
<rect x="270.3" y="237.2" width="2.9" height="9.0" fill="#d9d6d2" />
<rect x="276.1" y="237.7" width="1.7" height="9.0" fill="#4d4f52" />
<rect x="280.7" y="237.7" width="1.7" height="9.0" fill="#4d4f52" />
<rect x="277.8" y="237.7" width="2.9" height="9.0" fill="#d9d6d2" />
<rect x="201.6" y="253.9" width="1.7" height="9.5" fill="#4d4f52" />
<rect x="206.2" y="253.9" width="1.7" height="9.5" fill="#4d4f52" />
<rect x="203.3" y="253.9" width="2.9" height="9.5" fill="#c2c0be" />
<rect x="209.0" y="254.4" width="1.7" height="9.5" fill="#4d4f52" />
<rect x="213.6" y="254.4" width="1.7" height="9.5" fill="#4d4f52" />
<rect x="210.7" y="254.4" width="2.9" height="9.5" fill="#c2c0be" />
<rect x="216.5" y="254.9" width="1.7" height="9.5" fill="#4d4f52" />
<rect x="221.1" y="254.9" width="1.7" height="9.5" fill="#4d4f52" />
<rect x="218.2" y="254.9" width="2.9" height="9.5" fill="#c2c0be" />
<rect x="223.9" y="255.3" width="1.7" height="9.5" fill="#4d4f52" />
<rect x="228.5" y="255.3" width="1.7" height="9.5" fill="#4d4f52" />
<rect x="225.6" y="255.3" width="2.9" height="9.5" fill="#c2c0be" />
<rect x="231.4" y="255.8" width="1.7" height="9.5" fill="#4d4f52" />
<rect x="236.0" y="255.8" width="1.7" height="9.5" fill="#4d4f52" />
<rect x="233.1" y="255.8" width="2.9" height="9.5" fill="#c2c0be" />
<rect x="238.8" y="256.3" width="1.7" height="9.5" fill="#4d4f52" />
<rect x="243.4" y="256.3" width="1.7" height="9.5" fill="#4d4f52" />
<rect x="240.5" y="256.3" width="2.9" height="9.5" fill="#c2c0be" />
<rect x="246.3" y="256.8" width="1.7" height="9.5" fill="#4d4f52" />
<rect x="250.9" y="256.8" width="1.7" height="9.5" fill="#4d4f52" />
<rect x="248.0" y="256.8" width="2.9" height="9.5" fill="#c2c0be" />
<rect x="253.8" y="257.2" width="1.7" height="9.5" fill="#4d4f52" />
<rect x="258.4" y="257.2" width="1.7" height="9.5" fill="#4d4f52" />
<rect x="255.4" y="257.2" width="2.9" height="9.5" fill="#c2c0be" />
<rect x="261.2" y="257.7" width="1.7" height="9.5" fill="#4d4f52" />
<rect x="265.8" y="257.7" width="1.7" height="9.5" fill="#4d4f52" />
<rect x="262.9" y="257.7" width="2.9" height="9.5" fill="#c2c0be" />
<rect x="268.6" y="258.2" width="1.7" height="9.5" fill="#4d4f52" />
<rect x="273.2" y="258.2" width="1.7" height="9.5" fill="#4d4f52" />
<rect x="270.3" y="258.2" width="2.9" height="9.5" fill="#c2c0be" />
<rect x="276.1" y="258.7" width="1.7" height="9.5" fill="#4d4f52" />
<rect x="280.7" y="258.7" width="1.7" height="9.5" fill="#4d4f52" />
<rect x="277.8" y="258.7" width="2.9" height="9.5" fill="#c2c0be" />
<rect x="201.6" y="271.9" width="1.7" height="9.5" fill="#4d4f52" />
<rect x="206.2" y="271.9" width="1.7" height="9.5" fill="#4d4f52" />
<rect x="203.3" y="271.9" width="2.9" height="9.5" fill="#c2c0be" />
<rect x="209.0" y="272.4" width="1.7" height="9.5" fill="#4d4f52" />
<rect x="213.6" y="272.4" width="1.7" height="9.5" fill="#4d4f52" />
<rect x="210.7" y="272.4" width="2.9" height="9.5" fill="#c2c0be" />
<rect x="216.5" y="272.9" width="1.7" height="9.5" fill="#4d4f52" />
<rect x="221.1" y="272.9" width="1.7" height="9.5" fill="#4d4f52" />
<rect x="218.2" y="272.9" width="2.9" height="9.5" fill="#c2c0be" />
<rect x="223.9" y="273.3" width="1.7" height="9.5" fill="#4d4f52" />
<rect x="228.5" y="273.3" width="1.7" height="9.5" fill="#4d4f52" />
<rect x="225.6" y="273.3" width="2.9" height="9.5" fill="#c2c0be" />
<rect x="231.4" y="273.8" width="1.7" height="9.5" fill="#4d4f52" />
<rect x="236.0" y="273.8" width="1.7" height="9.5" fill="#4d4f52" />
<rect x="233.1" y="273.8" width="2.9" height="9.5" fill="#c2c0be" />
<rect x="238.8" y="274.3" width="1.7" height="9.5" fill="#4d4f52" />
<rect x="243.4" y="274.3" width="1.7" height="9.5" fill="#4d4f52" />
<rect x="240.5" y="274.3" width="2.9" height="9.5" fill="#c2c0be" />
<rect x="246.3" y="274.8" width="1.7" height="9.5" fill="#4d4f52" />
<rect x="250.9" y="274.8" width="1.7" height="9.5" fill="#4d4f52" />
<rect x="248.0" y="274.8" width="2.9" height="9.5" fill="#c2c0be" />
<rect x="253.8" y="275.2" width="1.7" height="9.5" fill="#4d4f52" />
<rect x="258.4" y="275.2" width="1.7" height="9.5" fill="#4d4f52" />
<rect x="255.4" y="275.2" width="2.9" height="9.5" fill="#c2c0be" />
<rect x="261.2" y="275.7" width="1.7" height="9.5" fill="#4d4f52" />
<rect x="265.8" y="275.7" width="1.7" height="9.5" fill="#4d4f52" />
<rect x="262.9" y="275.7" width="2.9" height="9.5" fill="#c2c0be" />
<rect x="268.6" y="276.2" width="1.7" height="9.5" fill="#4d4f52" />
<rect x="273.2" y="276.2" width="1.7" height="9.5" fill="#4d4f52" />
<rect x="270.3" y="276.2" width="2.9" height="9.5" fill="#c2c0be" />
<rect x="276.1" y="276.7" width="1.7" height="9.5" fill="#4d4f52" />
<rect x="280.7" y="276.7" width="1.7" height="9.5" fill="#4d4f52" />
<rect x="277.8" y="276.7" width="2.9" height="9.5" fill="#c2c0be" />
<rect x="172.0" y="213.0" width="4.5" height="7.0" fill="#6b6259" />
<rect x="184.0" y="213.8" width="4.5" height="7.0" fill="#6b6259" />
<rect x="172.0" y="229.0" width="4.5" height="7.0" fill="#6b6259" />
<rect x="184.0" y="229.8" width="4.5" height="7.0" fill="#6b6259" />
<rect x="183.0" y="222.3" width="24.0" height="2.6" fill="#8c8177" />
<rect x="216.0" y="244.0" width="10.0" height="2.4" fill="#6b655f" />
<rect x="256.0" y="247.0" width="12.0" height="2.4" fill="#7b746d" />
<polygon points="141.0,242.0 141.0,214.0 155.0,210.0 210.0,244.0" fill="#7f604d" />
<polygon points="155.0,210.0 210.0,244.0 188.0,244.0 150.0,213.0" fill="#8b6a54" />
<polygon points="141.0,214.0 150.0,211.0 150.0,302.0 141.0,303.0" fill="#48423e" />
<rect x="150.0" y="242.0" width="60.0" height="60.0" fill="#857b71" />
<rect x="150.0" y="241.0" width="60.0" height="2.2" fill="#9c9085" />
<rect x="150.0" y="264.5" width="60.0" height="1.8" fill="#6d655e" />
<polygon points="180.2,203.5 176.5,228.0 173.0,238.5 194.3,238.5 187.0,228.0 181.2,203.5" fill="#7c402c" />
<rect x="175.5" y="238.5" width="16.0" height="6.0" fill="#b5aca2" />
<rect x="157.0" y="249.0" width="3.0" height="11.5" fill="#4d443d" />
<rect x="161.0" y="249.0" width="3.0" height="11.5" fill="#4d443d" />
<rect x="167.5" y="249.0" width="3.0" height="11.5" fill="#4d443d" />
<rect x="171.5" y="249.0" width="3.0" height="11.5" fill="#4d443d" />
<rect x="179.0" y="249.0" width="3.2" height="11.5" fill="#4d443d" />
<rect x="183.6" y="249.0" width="3.2" height="11.5" fill="#4d443d" />
<rect x="188.2" y="249.0" width="3.2" height="11.5" fill="#4d443d" />
<rect x="196.7" y="249.0" width="3.0" height="11.5" fill="#4d443d" />
<rect x="200.6" y="249.0" width="3.0" height="11.5" fill="#4d443d" />
<rect x="157.0" y="272.0" width="3.0" height="11.5" fill="#4d443d" />
<rect x="161.0" y="272.0" width="3.0" height="11.5" fill="#4d443d" />
<rect x="167.5" y="272.0" width="3.0" height="11.5" fill="#4d443d" />
<rect x="171.5" y="272.0" width="3.0" height="11.5" fill="#4d443d" />
<rect x="179.0" y="272.0" width="3.2" height="11.5" fill="#4d443d" />
<rect x="183.6" y="272.0" width="3.2" height="11.5" fill="#4d443d" />
<rect x="188.2" y="272.0" width="3.2" height="11.5" fill="#4d443d" />
<rect x="196.7" y="272.0" width="3.0" height="11.5" fill="#4d443d" />
<rect x="200.6" y="272.0" width="3.0" height="11.5" fill="#4d443d" />
<path d="M163.4,300 L163.4,296 Q163.4,289.5 170.20000000000002,289.5 Q177.0,289.5 177.0,296 L177.0,300 Z" fill="#2e2927" />
<path d="M185,300 L185,296 Q185,289.5 192.0,289.5 Q199,289.5 199,296 L199,300 Z" fill="#2e2927" />
<polygon points="0.0,136.6 52.0,149.2 107.0,162.8 113.0,169.0 151.0,211.4 151.0,214.0 24.0,199.5 0.0,172.0" fill="url(#zroofL)" />
<polygon points="0.0,136.6 107.0,162.8 113.0,169.0 104.0,166.0 0.0,141.0" fill="#8e5e41" opacity=".6"/>
<rect x="106.2" y="153.5" width="5.6" height="12.0" fill="#d8cfc6" />
<rect x="51.5" y="144.5" width="5.2" height="3.0" fill="#b9aea4" />
<polygon points="42.0,175.0 61.0,178.5 61.0,190.0 48.0,188.5" fill="#3b2c25" />
<rect x="51.0" y="181.5" width="7.2" height="6.0" fill="#c4bbb0" />
<polygon points="62.0,180.0 89.0,183.5 89.0,195.0 68.0,193.5" fill="#3b2c25" />
<rect x="71.0" y="186.5" width="3.9" height="6.0" fill="#c4bbb0" />
<rect x="76.7" y="187.1" width="3.9" height="6.0" fill="#c4bbb0" />
<rect x="82.3" y="187.7" width="3.9" height="6.0" fill="#c4bbb0" />
<polygon points="86.0,185.0 108.0,188.5 108.0,197.0 92.0,195.5" fill="#3b2c25" />
<rect x="95.0" y="191.5" width="2.2" height="3.0" fill="#c4bbb0" />
<rect x="99.0" y="192.1" width="2.2" height="3.0" fill="#c4bbb0" />
<rect x="103.0" y="192.7" width="2.2" height="3.0" fill="#c4bbb0" />
<polygon points="107.0,189.0 124.0,192.5 124.0,200.0 113.0,198.5" fill="#3b2c25" />
<rect x="116.0" y="195.5" width="5.2" height="2.0" fill="#c4bbb0" />
<polygon points="0.0,171.0 24.0,198.5 24.0,306.0 0.0,306.0" fill="#67605a" />
<rect x="1.6" y="204.0" width="10.8" height="16.5" fill="#bdb8b2" />
<rect x="6.4" y="204.0" width="1.0" height="16.5" fill="#5f5a55" />
<rect x="1.6" y="211.5" width="10.8" height="1.0" fill="#5f5a55" />
<rect x="13.5" y="212.0" width="1.6" height="94.0" fill="#4f4a46" />
<polygon points="24.0,199.0 143.0,212.5 143.0,240.0 24.0,238.5" fill="#7d5d4e" />
<polygon points="24.0,199.0 151.0,213.5 151.0,216.5 24.0,202.0" fill="#3a2d27" />
<polygon points="22.0,231.5 143.0,233.5 141.5,240.5 23.0,238.8" fill="#7a3e2d" />
<rect x="33.1" y="208.9" width="3.0" height="16.5" fill="#cbc3b8" />
<rect x="38.4" y="208.9" width="3.0" height="16.5" fill="#cbc3b8" />
<rect x="58.3" y="210.2" width="3.0" height="16.5" fill="#cbc3b8" />
<rect x="63.6" y="210.2" width="3.0" height="16.5" fill="#cbc3b8" />
<rect x="83.6" y="211.4" width="2.2" height="16.5" fill="#cbc3b8" />
<rect x="88.1" y="211.4" width="2.2" height="16.5" fill="#cbc3b8" />
<rect x="102.2" y="212.4" width="2.3" height="16.5" fill="#cbc3b8" />
<rect x="106.8" y="212.4" width="2.3" height="16.5" fill="#cbc3b8" />
<rect x="111.4" y="212.4" width="2.3" height="16.5" fill="#cbc3b8" />
<rect x="125.0" y="213.5" width="1.8" height="16.5" fill="#cbc3b8" />
<rect x="129.1" y="213.5" width="1.8" height="16.5" fill="#cbc3b8" />
<rect x="133.1" y="213.5" width="1.8" height="16.5" fill="#cbc3b8" />
<circle cx="72" cy="221.5" r="1.6" fill="#e6e1da"/>
<rect x="24.0" y="240.0" width="118.0" height="66.0" fill="#645d57" />
<rect x="24.0" y="270.5" width="118.0" height="35.5" fill="#57524d" />
<rect x="0.0" y="269.5" width="142.0" height="1.4" fill="#58534f" />
<rect x="26.0" y="254.0" width="23.6" height="14.6" fill="#7d4f3e" />
<rect x="26.7" y="255.0" width="3.1" height="12.6" fill="#a59f99" />
<rect x="31.4" y="255.0" width="3.1" height="12.6" fill="#a59f99" />
<rect x="36.1" y="255.0" width="3.1" height="12.6" fill="#a59f99" />
<rect x="40.9" y="255.0" width="3.1" height="12.6" fill="#a59f99" />
<rect x="45.6" y="255.0" width="3.1" height="12.6" fill="#a59f99" />
<rect x="61.0" y="254.0" width="25.0" height="14.6" fill="#7d4f3e" />
<rect x="61.7" y="255.0" width="2.6" height="12.6" fill="#a59f99" />
<rect x="65.9" y="255.0" width="2.6" height="12.6" fill="#a59f99" />
<rect x="70.0" y="255.0" width="2.6" height="12.6" fill="#a59f99" />
<rect x="74.2" y="255.0" width="2.6" height="12.6" fill="#a59f99" />
<rect x="78.4" y="255.0" width="2.6" height="12.6" fill="#a59f99" />
<rect x="82.5" y="255.0" width="2.6" height="12.6" fill="#a59f99" />
<rect x="96.0" y="254.0" width="13.8" height="14.6" fill="#7d4f3e" />
<rect x="96.7" y="255.0" width="3.0" height="12.6" fill="#a59f99" />
<rect x="101.3" y="255.0" width="3.0" height="12.6" fill="#a59f99" />
<rect x="105.9" y="255.0" width="3.0" height="12.6" fill="#a59f99" />
<rect x="122.0" y="254.0" width="8.0" height="14.6" fill="#7d4f3e" />
<rect x="122.7" y="255.0" width="2.4" height="12.6" fill="#a59f99" />
<rect x="126.7" y="255.0" width="2.4" height="12.6" fill="#a59f99" />
<rect x="63.0" y="276.3" width="38.0" height="1.1" fill="#cfcac4" opacity=".8"/>
<path d="M-6,306 L-6,291 Q-6,281.4 -0.75,281.4 Q4.5,281.4 4.5,291 L4.5,306 Z" fill="#3e3936" />
<path d="M24.4,306 L24.4,291 Q24.4,281.4 34.2,281.4 Q44.0,281.4 44.0,291 L44.0,306 Z" fill="#3e3936" />
<path d="M49.6,306 L49.6,291 Q49.6,281.4 58.6,281.4 Q67.6,281.4 67.6,291 L67.6,306 Z" fill="#3e3936" />
<path d="M72.4,306 L72.4,291 Q72.4,281.4 81.30000000000001,281.4 Q90.2,281.4 90.2,291 L90.2,306 Z" fill="#3e3936" />
<path d="M95,306 L95,291 Q95,281.4 103.2,281.4 Q111.4,281.4 111.4,291 L111.4,306 Z" fill="#3e3936" />
<path d="M116,306 L116,291 Q116,281.4 123.5,281.4 Q131,281.4 131,291 L131,306 Z" fill="#3e3936" />
<rect x="27.0" y="294.0" width="8.0" height="10.0" fill="#6b4030" opacity=".7"/>
<rect x="53.0" y="294.0" width="8.0" height="10.0" fill="#7a4630" opacity=".7"/>
<rect x="0.0" y="291.5" width="380.0" height="1.6" fill="#aaa49f" opacity=".45"/>
<rect x="0.0" y="295.5" width="330.0" height="1.2" fill="#9b9691" opacity=".35"/>
<polygon points="0.0,304.0 464.0,295.0 464.0,297.7 0.0,317.0" fill="#2b2b2e" />
<path d="M0,310.5 L464,296.3" stroke="#55514f" stroke-width="9" stroke-dasharray="1.1 1.9" opacity=".42" fill="none"/>
<polygon points="0.0,317.0 464.0,297.7 464.0,310.2 0.0,345.0" fill="url(#zwall)" />
<polygon points="0.0,317.0 464.0,297.7 464.0,299.3 0.0,318.8" fill="#a7a19a" />
<polygon points="0.0,345.0 464.0,310.2 464.0,313.6 0.0,349.0" fill="#4b3e36" />
<polygon points="0.0,347.8 464.0,312.6 464.0,315.1 0.0,351.5" fill="#1f1a19" />
<rect x="150.0" y="312.8" width="3.0" height="17.2" fill="#57514c" opacity="0.35"/>
<rect x="162.0" y="312.2" width="2.0" height="17.0" fill="#57514c" opacity="0.3"/>
<rect x="176.0" y="311.7" width="4.0" height="16.6" fill="#57514c" opacity="0.3"/>
<rect x="196.0" y="310.8" width="2.0" height="16.1" fill="#57514c" opacity="0.35"/>
<rect x="214.0" y="310.1" width="3.0" height="15.7" fill="#57514c" opacity="0.3"/>
<rect x="236.0" y="309.2" width="2.0" height="15.1" fill="#57514c" opacity="0.3"/>
<rect x="330.0" y="305.2" width="4.0" height="12.8" fill="#57514c" opacity="0.4"/>
<rect x="344.0" y="304.7" width="3.0" height="12.4" fill="#57514c" opacity="0.4"/>
<rect x="352.0" y="304.3" width="3.0" height="12.2" fill="#57514c" opacity="0.35"/>
<rect x="120.0" y="314.0" width="2.0" height="18.0" fill="#57514c" opacity="0.3"/>
<rect x="20.0" y="318.2" width="3.0" height="20.5" fill="#57514c" opacity="0.2"/>
<polygon points="61.0,315.0 101.0,311.8 74.0,338.0 60.0,340.0" fill="#2f2b29" />
<polygon points="38.0,341.5 78.0,338.0 78.0,343.0 38.0,346.5" fill="#26211f" />
<polygon points="296.0,305.7 316.0,303.8 306.0,321.5 291.0,323.0" fill="#2d2927" />
<polygon points="282.0,323.0 300.0,321.5 300.0,325.5 282.0,327.0" fill="#211d1c" />
<polygon points="101.0,308.0 131.0,306.5 131.0,313.2 101.0,314.5" fill="#8d8882" />
<rect x="134.5" y="225.0" width="1.4" height="78.0" fill="#3d3a38" />
<rect x="247.5" y="225.0" width="1.2" height="72.0" fill="#45413f" />
<rect x="322.0" y="238.0" width="1.0" height="56.0" fill="#45413f" />
<rect x="413.5" y="238.0" width="1.0" height="56.0" fill="#55504c" />
</g></symbol></defs></svg>
<svg style="left:1502px;top:402px" width="720" height="480" viewBox="0 0 720 480"><use href="#zurich" x="0" y="0" width="720" height="480"/></svg>
<svg style="left:332px;top:947px;overflow:hidden" width="180" height="179" viewBox="120 0 480 480" preserveAspectRatio="none"><use href="#zurich" x="0" y="0" width="720" height="480"/></svg>
<!-- select chevron -->
<svg style="left:1240px;top:240px" width="26" height="24" viewBox="0 0 26 24"><path fill="none" stroke="#241f20" stroke-width="3.2" d="M5.6,8 L13,15.4 L20.4,8"/></svg>
<!-- instagram glyph -->
<svg style="left:104px;top:348.4px" width="54.4" height="54.4" viewBox="0 0 54 54"><rect x="12.5" y="12.5" width="29.5" height="29.5" rx="8" fill="none" stroke="#fff" stroke-width="3.2"/><circle cx="27.2" cy="27.2" r="7" fill="none" stroke="#fff" stroke-width="3.2"/><circle cx="35.6" cy="18.8" r="2" fill="#fff"/></svg>
<!-- banner close -->
<svg style="left:1221px;top:347px" width="51" height="51" viewBox="0 0 51 51"><path fill="none" stroke="#2b2f3a" stroke-width="2.8" stroke-linecap="round" d="M16,15.3 L35.6,34.9 M35.6,15.3 L16,34.9"/></svg>
<!-- emoji -->
<svg style="left:1150px;top:859px" width="45" height="45" viewBox="0 0 45 45"><circle cx="23" cy="22.9" r="11.5" fill="none" stroke="#5f6368" stroke-width="3"/><circle cx="19.7" cy="19.7" r="1.8" fill="#5f6368"/><circle cx="26.4" cy="19.7" r="1.8" fill="#5f6368"/><path fill="#5f6368" d="M18,25.2 H28.2 A5.1,4.6 0 0 1 18,25.2 Z"/></svg>
<!-- hash -->
<svg style="left:1208px;top:859px" width="45" height="45" viewBox="0 0 45 45"><path fill="none" stroke="#5f6368" stroke-width="2.4" d="M21.2,13 L17.7,31.9 M27.1,13 L23.7,31.9 M15.7,19.7 H30.6 M14.3,25.2 H29.4"/></svg>
<!-- book -->
<svg style="left:1195px;top:946.5px" width="58" height="58" viewBox="0 0 58 58"><path fill="none" stroke="#fff" stroke-width="2.1" stroke-linejoin="round" d="M17,19 Q23,19 29,22 V36.8 Q23,34.5 17,35 Z M41,19 Q35,19 29,22 V36.8 Q35,34.5 41,35 Z"/><path fill="none" stroke="#fff" stroke-width="2.4" stroke-linejoin="round" d="M18.6,37 V39.6 Q24,39.2 27,40.3 H31 Q34,39.2 39.4,39.6 V37"/></svg>
<!-- canva -->
<svg style="left:1195px;top:1023px" width="58" height="58" viewBox="0 0 58 58"><text transform="translate(29.6 42.3) scale(.76 1)" text-anchor="middle" font-family="'Liberation Serif', serif" font-style="italic" font-size="40" fill="#fff">C</text></svg>
<!-- image placeholder icon -->
<svg style="left:183px;top:1008px" width="56" height="56" viewBox="0 0 56 56"><rect x="3.35" y="3.35" width="49.3" height="49.3" rx="1" fill="#fdfdfc" stroke="#73849f" stroke-width="6.7"/><rect x="0" y="0" width="56" height="56" rx="3" fill="none"/><circle cx="20.9" cy="17.5" r="3.6" fill="#73849f"/><path fill="#73849f" d="M10.8,41.8 L17.4,27.8 L24.4,35.3 L34.9,21.3 L45.2,41.8 Z"/></svg>
<!-- thumbnail remove -->
<svg style="left:486px;top:934px" width="38" height="38" viewBox="0 0 38 38"><circle cx="19" cy="19" r="19" fill="#132e57"/><path fill="none" stroke="#fff" stroke-width="3" stroke-linecap="round" d="M8.8,8.8 L29.2,29.2 M29.2,8.8 L8.8,29.2"/></svg>
</main>

<footer>
<div class="a" style="left:2106px;top:1305px;width:180px;height:70px;background:#fbad1e;border-radius:3px 0 0 3px"></div>
<div class="a" style="left:2286px;top:1305px;width:71px;height:70px;background:#fdce7b;border-radius:0 3px 3px 0"></div>
<!-- calendar -->
<svg style="left:1734px;top:1326px" width="28" height="28" viewBox="0 0 28 28"><path fill="#132e57" d="M3,4.2 H5.9 V2.4 Q5.9,1 7.4,1 Q8.9,1 8.9,2.4 V4.2 H12.5 V2.4 Q12.5,1 14,1 Q15.5,1 15.5,2.4 V4.2 H19 V2.4 Q19,1 20.5,1 Q22,1 22,2.4 V4.2 H24.9 Q26.9,4.2 26.9,6.2 V24.9 Q26.9,26.9 24.9,26.9 H3 Q1,26.9 1,24.9 V6.2 Q1,4.2 3,4.2 Z M4,12.4 V23.9 H23.9 V12.4 Z" fill-rule="evenodd"/></svg>
<!-- footer clear X -->
<svg style="left:2040px;top:1329px" width="24" height="24" viewBox="0 0 24 24"><path fill="none" stroke="#132e57" stroke-width="2.4" d="M3.4,3.4 L20,20 M20,3.4 L3.4,20"/></svg>
<!-- schedule chevron -->
<svg style="left:2309px;top:1330px" width="26" height="20" viewBox="0 0 26 20"><path fill="none" stroke="#132e57" stroke-width="3.2" d="M5.4,5.6 L12.4,12.6 L19.4,5.6"/></svg>
<span class="t" style="left:1774.6px;top:1329.00px;font:normal 700 24.57px/1 'Liberation Sans', sans-serif;color:#132e57;transform:scaleX(0.9472);-webkit-text-stroke:0.3px #132e57;">Tue, Nov 8 at 7:20PM</span>
<span class="t" style="left:2145px;top:1329.00px;font:normal 700 24.57px/1 'Liberation Sans', sans-serif;color:#132e57;transform:scaleX(0.9340);-webkit-text-stroke:0.3px #132e57;">Schedule</span>
</footer>

</body></html>
